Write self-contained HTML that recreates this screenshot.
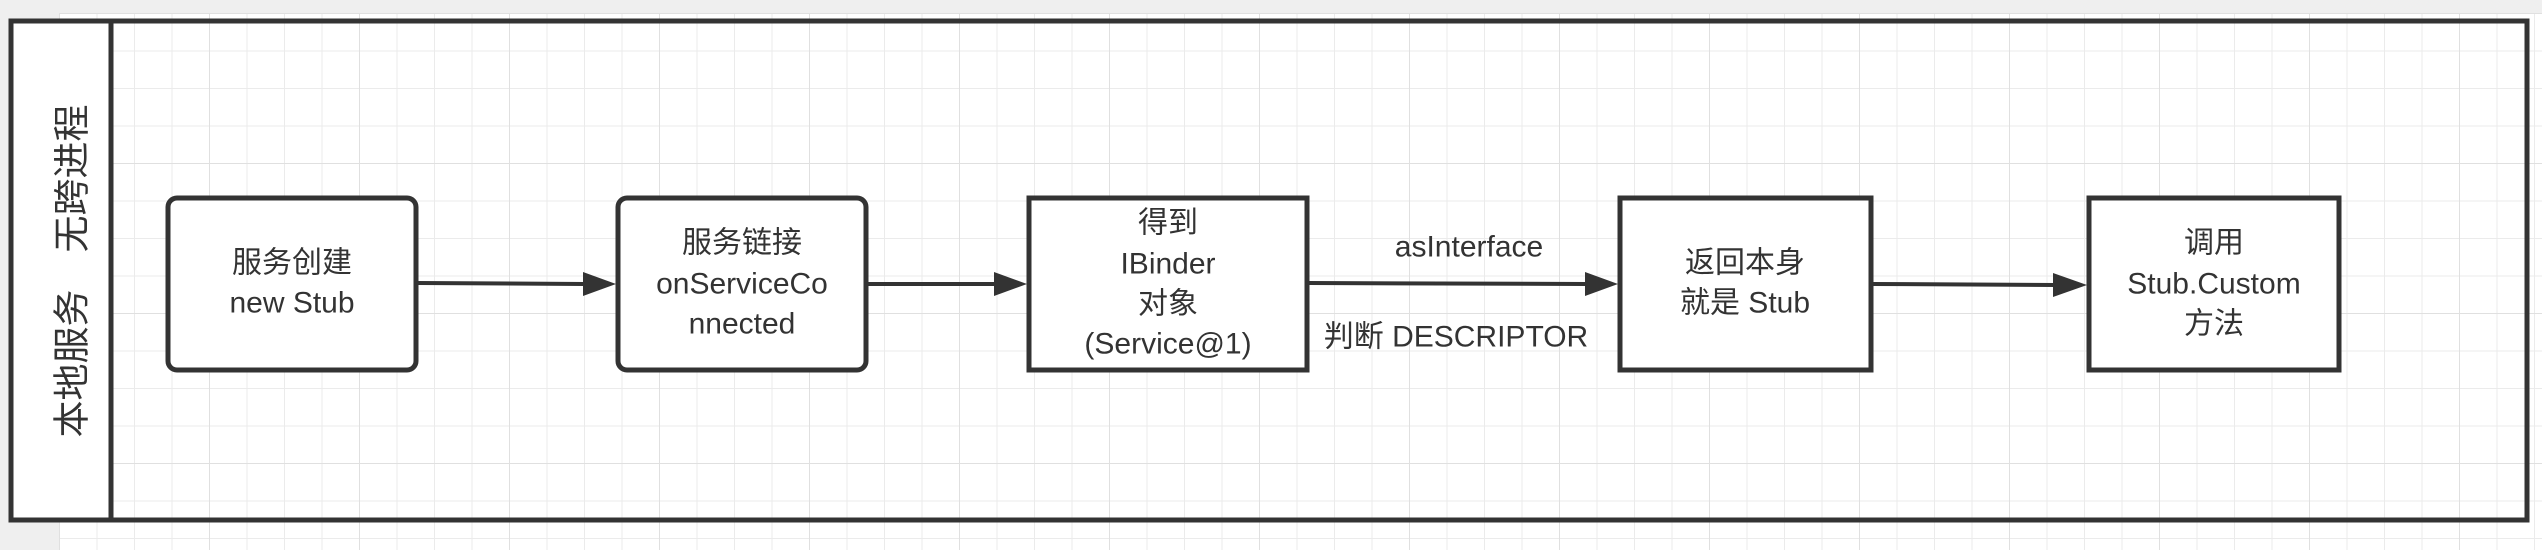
<!DOCTYPE html>
<html><head><meta charset="utf-8"><style>
html,body{margin:0;padding:0;background:#efefef;}
svg{display:block;}
text{font-family:"Liberation Sans","Noto Sans CJK SC",sans-serif;fill:#333;}
</style></head><body>
<svg width="2542" height="550" viewBox="0 0 2542 550" xmlns="http://www.w3.org/2000/svg">
<defs>
<pattern id="g" x="59" y="13" width="37.5" height="37.5" patternUnits="userSpaceOnUse">
<path d="M0 0H37.5M0 0V37.5" stroke="#ebebeb" stroke-width="2" fill="none"/>
</pattern>
<pattern id="G" x="59" y="13" width="150" height="150" patternUnits="userSpaceOnUse">
<path d="M0 0H150M0 0V150" stroke="#e0e0e0" stroke-width="2" fill="none"/>
</pattern>
<marker id="a" markerWidth="10" markerHeight="8" refX="9" refY="4" orient="auto" markerUnits="userSpaceOnUse" viewBox="0 0 10 8">
</marker>
</defs>
<rect x="59" y="13" width="2483" height="537" fill="#fff"/>
<rect x="59" y="13" width="2483" height="537" fill="url(#g)"/>
<rect x="59" y="13" width="2483" height="537" fill="url(#G)"/>
<rect x="11" y="21" width="2516" height="499" fill="#fff" fill-opacity="0.0"/>
<rect x="11" y="21" width="100" height="499" fill="#fff"/>
<rect x="11" y="21" width="2516" height="499" fill="none" stroke="#333" stroke-width="5"/>
<line x1="111" y1="21" x2="111" y2="520" stroke="#333" stroke-width="5"/>
<text transform="translate(72,271) rotate(-90)" font-size="37" text-anchor="middle" dominant-baseline="central">本地服务　无跨进程</text>

<g stroke="#333" stroke-width="5" fill="#fff">
<rect x="168" y="198" width="248" height="172" rx="9"/>
<rect x="618" y="198" width="248" height="172" rx="9"/>
<rect x="1029" y="198" width="278" height="172"/>
<rect x="1620" y="198" width="251" height="172"/>
<rect x="2089" y="198" width="250" height="172"/>
</g>
<g stroke="#333" stroke-width="4">
<line x1="418" y1="283" x2="585" y2="284"/>
<line x1="868" y1="284" x2="996" y2="284"/>
<line x1="1309" y1="283" x2="1587" y2="284"/>
<line x1="1873" y1="284" x2="2055" y2="285"/>
</g>
<g fill="#333">
<path d="M583 272L616 284L583 296Z"/>
<path d="M994 272L1027 284L994 296Z"/>
<path d="M1585 272L1618 284L1585 296Z"/>
<path d="M2053 273L2087 285L2053 297Z"/>
</g>
<g font-size="30" text-anchor="middle" dominant-baseline="central">
<text x="292" y="263">服务创建</text>
<text x="292" y="303">new Stub</text>
<text x="742" y="243">服务链接</text>
<text x="742" y="284">onServiceCo</text>
<text x="742" y="324">nnected</text>
<text x="1168" y="223">得到</text>
<text x="1168" y="264">IBinder</text>
<text x="1168" y="304">对象</text>
<text x="1168" y="344">(Service@1)</text>
<text x="1469" y="247">asInterface</text>
<text x="1456" y="337">判断 DESCRIPTOR</text>
<text x="1745" y="263">返回本身</text>
<text x="1745" y="303">就是 Stub</text>
<text x="2214" y="243">调用</text>
<text x="2214" y="284">Stub.Custom</text>
<text x="2214" y="324">方法</text>
</g>
</svg>
</body></html>
